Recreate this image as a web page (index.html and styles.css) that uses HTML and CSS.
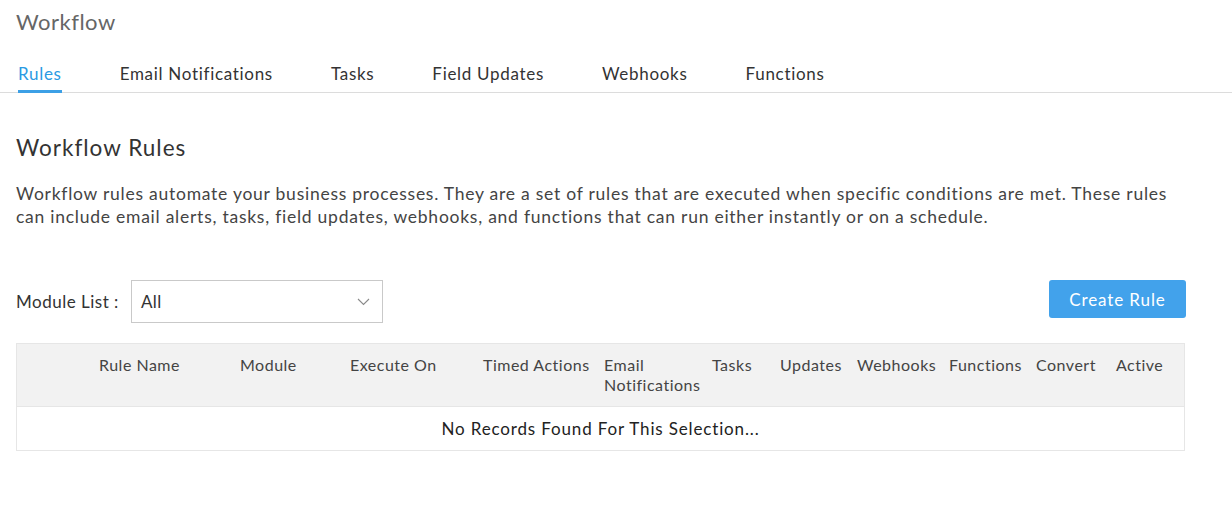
FILE: index.html
```html
<!DOCTYPE html>
<html lang="en">
<head>
    <meta charset="UTF-8">
    <title>Workflow</title>
    <link rel="stylesheet" href="styles.css">
</head>
<body>
    <div class="page-title">Workflow</div>

    <div class="tabs">
        <div class="tab active">Rules</div>
        <div class="tab">Email Notifications</div>
        <div class="tab">Tasks</div>
        <div class="tab">Field Updates</div>
        <div class="tab">Webhooks</div>
        <div class="tab">Functions</div>
    </div>

    <div class="content">
        <h2 class="section-title">Workflow Rules</h2>
        <p class="section-desc">Workflow rules automate your business processes. They are a set of rules that are executed when specific conditions are met. These rules can include email alerts, tasks, field updates, webhooks, and functions that can run either instantly or on a schedule.</p>

        <div class="toolbar">
            <div class="module-filter">
                <span class="filter-label">Module List :</span>
                <div class="select-box">
                    <span>All</span>
                    <svg width="13" height="8" viewBox="0 0 13 8"><path d="M1 1l5.5 5.5L12 1" fill="none" stroke="#8a8a8a" stroke-width="1.1"/></svg>
                </div>
            </div>
            <button class="create-button">Create Rule</button>
        </div>

        <div class="rules-table">
            <div class="table-head">
                <div></div>
                <div>Rule Name</div>
                <div>Module</div>
                <div>Execute On</div>
                <div>Timed Actions</div>
                <div>Email<br>Notifications</div>
                <div>Tasks</div>
                <div>Updates</div>
                <div>Webhooks</div>
                <div>Functions</div>
                <div>Convert</div>
                <div>Active</div>
            </div>
            <div class="empty-row">No Records Found For This Selection...</div>
        </div>
    </div>
</body>
</html>
```

FILE: styles.css
```css
body {
    margin: 0;
    font-family: Lato, "Open Sans", Arial, sans-serif;
    letter-spacing: 0.5px;
    color: #333;
    background: #fff;
}
.page-title {
    font-size: 22px;
    color: #666;
    padding: 9px 16px 0;
    height: 31px;
    line-height: 26px;
}
.tabs {
    display: flex;
    gap: 58px;
    padding: 0 18px;
    border-bottom: 1px solid #dcdcdc;
    height: 52px;
    align-items: flex-end;
}
.tab {
    font-size: 17px;
    letter-spacing: 0.7px;
    color: #333;
    padding-bottom: 6px;
    border-bottom: 3px solid transparent;
    margin-bottom: -1px;
}
.tab.active {
    color: #2b9ae3;
    border-bottom-color: #3ca0e6;
}
.content {
    padding: 0 16px;
}
.section-title {
    font-size: 22.5px;
    letter-spacing: 1px;
    font-weight: normal;
    color: #333;
    margin: 41px 0 0;
    line-height: 28px;
}
.section-desc {
    font-size: 17.5px;
    letter-spacing: 0.75px;
    color: #444;
    line-height: 23px;
    margin: 20px 0 0;
    max-width: 1165px;
}
.toolbar {
    display: flex;
    justify-content: space-between;
    align-items: flex-start;
    margin-top: 52px;
    width: 1170px;
}
.module-filter {
    display: flex;
    align-items: center;
    gap: 12px;
}
.filter-label {
    font-size: 17px;
    color: #333;
}
.select-box {
    width: 229px;
    height: 41px;
    border: 1px solid #c9c9c9;
    display: flex;
    align-items: center;
    justify-content: space-between;
    padding: 0 12px 0 9px;
    font-size: 17px;
    color: #333;
}
.create-button {
    background: #42a2eb;
    color: #fff;
    border: none;
    border-radius: 3px;
    font-family: inherit;
    letter-spacing: 0.9px;
    font-size: 17px;
    width: 137px;
    height: 38px;
    cursor: pointer;
}
.rules-table {
    margin-top: 20px;
    width: 1167px;
    border: 1px solid #e6e6e6;
}
.table-head {
    display: grid;
    grid-template-columns: 82px 141px 110px 133px 121px 108px 68px 77px 92px 87px 80px 68px;
    background: #f2f2f2;
    height: 62px;
    box-sizing: border-box;
    padding-top: 11px;
    font-size: 16px;
    line-height: 20px;
    color: #444;
}
.empty-row {
    height: 43px;
    line-height: 43px;
    text-align: center;
    font-size: 17px;
    letter-spacing: 0.85px;
    color: #222;
    border-top: 1px solid #e6e6e6;
}
```
